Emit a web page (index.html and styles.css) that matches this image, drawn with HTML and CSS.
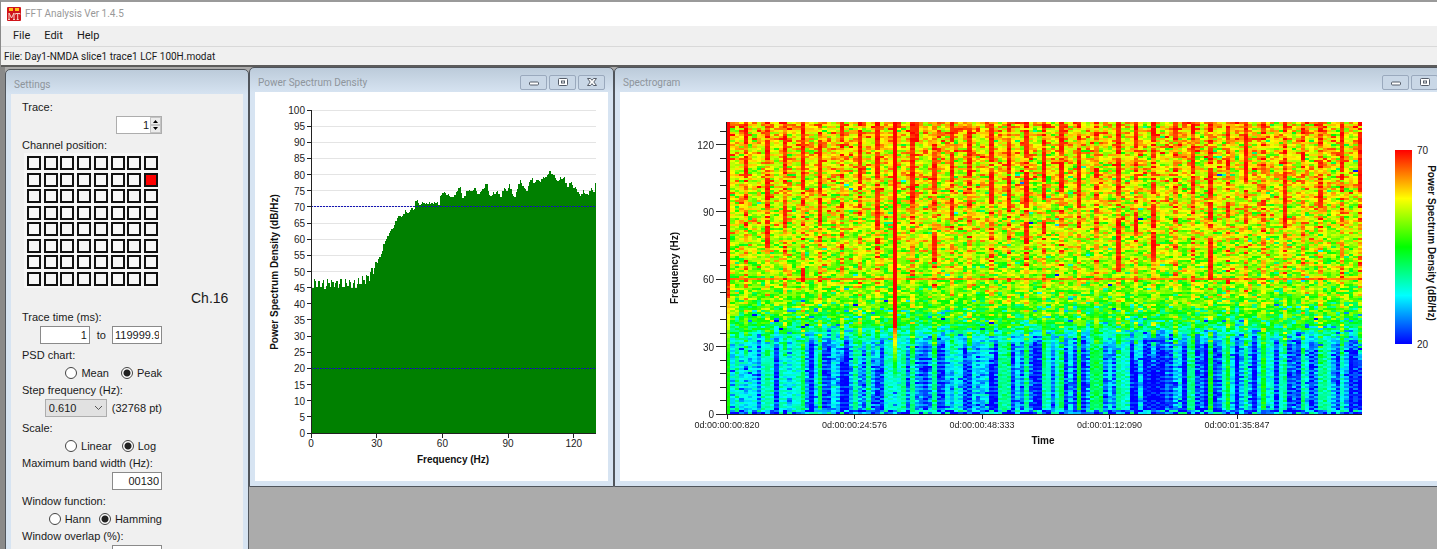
FILE: index.html
```html
<!DOCTYPE html>
<html lang="en">
<head>
<meta charset="utf-8">
<title>FFT Analysis Ver 1.4.5</title>
<link rel="stylesheet" href="styles.css">
</head>
<body>
<div class="app">
  <header class="titlebar">
    <svg class="logo" width="14" height="14" viewBox="0 0 14 14" aria-hidden="true">
      <rect width="14" height="14" rx="1" fill="#d0141a"/>
      <rect x="2" y="1" width="4" height="3" fill="#ffc21a"/>
      <rect x="8" y="1" width="4" height="3" fill="#ffc21a"/>
      <path d="M1 12.500h2M2 12V6l2.500 5L7 6v6M6 12.500h2M8.500 7.500V6.500h4.500v1M10.700 6.500v6M9.700 12.500h2" fill="none" stroke="#f6d3c8" stroke-width="1"/>
    </svg>
    <span>FFT Analysis Ver 1.4.5</span>
  </header>
  <nav class="menubar">
    <button class="menu">File</button>
    <button class="menu">Edit</button>
    <button class="menu">Help</button>
  </nav>
  <div class="filebar">File: Day1-NMDA slice1 trace1 LCF 100H.modat</div>
  <main class="desktop">
    <section class="window settings">
      <div class="caption"><span>Settings</span></div>
      <form class="form">
        <label class="label" for="trace">Trace:</label>
        <div class="row">
          <span class="spinner">
            <input class="field" id="trace" value="1">
            <span class="steps">
              <button type="button" class="step" aria-label="Increase"><svg width="7" height="4" viewBox="0 0 7 4"><path d="M1 4L3.500 1L6 4z"/></svg></button>
              <button type="button" class="step" aria-label="Decrease"><svg width="7" height="4" viewBox="0 0 7 4"><path d="M1 0L3.500 3L6 0z"/></svg></button>
            </span>
          </span>
        </div>
        <div class="label channel-label" id="channel-label">Channel position:</div>
        <div class="channels" id="channels" role="group" aria-labelledby="channel-label"></div>
        <output class="channel-name">Ch.16</output>
        <label class="label" for="from">Trace time (ms):</label>
        <div class="row">
          <input class="field medium" id="from" value="1">
          <label class="to" for="until">to</label>
          <input class="field medium clipped" id="until" value="119999.95">
        </div>
        <div class="label">PSD chart:</div>
        <div class="options">
          <label class="option"><input type="radio" name="psd">Mean</label>
          <label class="option"><input type="radio" name="psd" checked>Peak</label>
        </div>
        <label class="label" for="step">Step frequency (Hz):</label>
        <div class="row">
          <span class="picker">
            <select id="step"><option>0.610</option></select>
            <svg class="chevron" width="9" height="6" viewBox="0 0 9 6"><path d="M1 1l3.500 3.500L8 1" fill="none" stroke="#555"/></svg>
          </span>
          <span class="points">(32768 pt)</span>
        </div>
        <div class="label">Scale:</div>
        <div class="options wide">
          <label class="option"><input type="radio" name="scale">Linear</label>
          <label class="option"><input type="radio" name="scale" checked>Log</label>
        </div>
        <label class="label" for="band">Maximum band width (Hz):</label>
        <div class="row"><input class="field medium" id="band" value="00130"></div>
        <div class="label">Window function:</div>
        <div class="options tight">
          <label class="option"><input type="radio" name="win">Hann</label>
          <label class="option"><input type="radio" name="win" checked>Hamming</label>
        </div>
        <label class="label" for="overlap">Window overlap (%):</label>
        <div class="row"><input class="field medium" id="overlap" value="0"></div>
      </form>
    </section>

    <section class="window psd">
      <div class="caption">
        <span>Power Spectrum Density</span>
        <span class="controls">
          <button class="control" aria-label="Minimize"><svg width="12" height="10" viewBox="0 0 12 10"><rect x="1.500" y="5" width="9" height="3" rx="1" fill="#fff" stroke="#555d69"/></svg></button>
          <button class="control" aria-label="Restore"><svg width="12" height="10" viewBox="0 0 12 10"><rect x="1.500" y="1.500" width="9" height="7" rx="1" fill="#fff" stroke="#555d69"/><rect x="4.500" y="4" width="3" height="2" fill="#fff" stroke="#555d69"/></svg></button>
          <button class="control" aria-label="Close"><svg width="12" height="10" viewBox="0 0 12 10"><path d="M1.500 1.500h3L6 3.300 7.500 1.500h3L7.800 5l2.700 3.500h-3L6 6.700 4.500 8.500h-3L4.200 5z" fill="#fff" stroke="#555d69"/></svg></button>
        </span>
      </div>
      <svg class="chart" id="psd-chart" width="353" height="389" viewBox="255 92 353 389"></svg>
    </section>

    <section class="window spectrogram">
      <div class="caption">
        <span>Spectrogram</span>
        <span class="controls">
          <button class="control" aria-label="Minimize"><svg width="12" height="10" viewBox="0 0 12 10"><rect x="1.500" y="5" width="9" height="3" rx="1" fill="#fff" stroke="#555d69"/></svg></button>
          <button class="control" aria-label="Restore"><svg width="12" height="10" viewBox="0 0 12 10"><rect x="1.500" y="1.500" width="9" height="7" rx="1" fill="#fff" stroke="#555d69"/><rect x="4.500" y="4" width="3" height="2" fill="#fff" stroke="#555d69"/></svg></button>
          <button class="control" aria-label="Close"><svg width="12" height="10" viewBox="0 0 12 10"><path d="M1.500 1.500h3L6 3.300 7.500 1.500h3L7.800 5l2.700 3.500h-3L6 6.700 4.500 8.500h-3L4.200 5z" fill="#fff" stroke="#555d69"/></svg></button>
        </span>
      </div>
      <svg class="chart" id="spectrogram-chart" width="850" height="389" viewBox="620 92 850 389">
        <defs>
          <linearGradient id="scale" x1="0" y1="0" x2="0" y2="1">
            <stop offset="0" stop-color="#f00"/><stop offset=".25" stop-color="#ff0"/><stop offset=".5" stop-color="#0f0"/><stop offset=".75" stop-color="#0ff"/><stop offset="1" stop-color="#00f"/>
          </linearGradient>
        </defs>
        <foreignObject x="726" y="122" width="636" height="292"><canvas id="heat" class="heat" width="636" height="292"></canvas></foreignObject>
        <rect x="1395" y="150" width="17" height="194" fill="url(#scale)"/>
        <text class="tick" x="1417" y="154">70</text>
        <text class="tick" x="1417" y="348">20</text>
        <text class="axis" text-anchor="middle" transform="translate(1428 243) rotate(90)">Power Spectrum Density (dB/Hz)</text>
      </svg>
    </section>
  </main>
</div>
<script src="charts.js"></script>
</body>
</html>
```
FILE: styles.css
```css
* { box-sizing: border-box; }
body {
  margin: 0;
  height: 100vh;
  overflow: hidden;
  background: #f0f0f0;
  color: #1a1a1a;
  font: 11px/16px "Liberation Sans", Arial, sans-serif;
}
button, input, select { font: inherit; color: inherit; margin: 0; }
.app {
  height: 100%;
  display: flex;
  flex-direction: column;
  border-top: 2px solid #9a9a9a;
  border-left: 1px solid #8a8a8a;
}
.titlebar, .menubar, .filebar, .caption { font-family: Roboto, "Open Sans", sans-serif; }
.titlebar {
  flex: none;
  display: flex;
  align-items: center;
  gap: 4px;
  height: 24px;
  padding-left: 6px;
  background: #fff;
  color: #999;
  font-size: 10px;
}
.menubar { flex: none; display: flex; height: 20px; padding-left: 6px; }
.menu { border: 0; background: none; padding: 0 6px; margin-right: 2px; }
.filebar {
  flex: none;
  height: 19px;
  padding: 0 3px;
  border-top: 1px solid #d9d9d9;
  font-size: 10px;
  line-height: 19px;
}
.desktop {
  flex: 1;
  min-height: 0;
  display: flex;
  align-items: flex-start;
  padding-left: 4px;
  border-top: 2px solid #5c5c5c;
  background: linear-gradient(90deg, #8a8a8a 4px, #ababab 4px);
  overflow: hidden;
}
.window {
  flex: none;
  border: 1px solid #50555c;
  border-radius: 5px 5px 0 0;
  padding: 0 5px 5px;
  background: linear-gradient(#bccbda, #d7e4f2 25px);
}
.settings { width: 244px; margin-top: 2px; }
.psd { width: 365px; }
.caption {
  display: flex;
  align-items: center;
  justify-content: space-between;
  height: 24px;
  padding: 5px 3px 0 3px;
  color: #8e959c;
  font-size: 10px;
}
.controls { display: flex; gap: 2px; padding-bottom: 1px; }
.control {
  width: 27px;
  height: 15px;
  padding: 0;
  display: grid;
  place-items: center;
  border: 1px solid #9aa9bd;
  border-radius: 2px;
  background: #c9d7e6;
}
.form { background: #f0f0f0; padding: 4px 81px 0 11px; height: 100vh; display: flex; flex-direction: column; }
.label { flex: none; height: 18px; line-height: 18px; white-space: nowrap; }
.row { flex: none; display: flex; justify-content: flex-end; height: 20px; }
.channel-label { height: 17px; }
.field {
  height: 18px;
  padding: 0 2px;
  border: 1px solid #8a8a8a;
  border-radius: 0;
  background: #fff;
  text-align: right;
  outline: 0;
}
.medium { width: 50px; }
.clipped { text-align: left; }
.to { padding: 0 6px 0 7px; line-height: 18px; }
.spinner { display: flex; width: 46px; height: 18px; border: 1px solid #adadad; background: #fff; }
.spinner .field { width: 33px; height: 16px; border: 0; padding: 0 1px; }
.steps { display: flex; flex-direction: column; width: 11px; }
.step { flex: 1; min-height: 0; display: grid; place-items: center; padding: 0; border: 1px solid #c4c4c4; background: #ececec; }
.channels {
  flex: none;
  display: grid;
  grid-template-columns: repeat(8, 14px);
  grid-auto-rows: 14px;
  place-content: space-between;
  width: 136px;
  height: 135px;
  margin: 0 0 1px 2px;
  padding: 3px 2px 2px 3px;
  background: #f7f7f7;
}
.channel { padding: 0; border: 2px solid #111; background: #f7f7f7; }
.channel.on { background: #f00; }
.channel-name { flex: none; height: 19px; padding-left: 169px; font-size: 14px; line-height: 19px; }
.options { flex: none; display: flex; justify-content: flex-end; gap: 12px; height: 17px; }
.wide { padding-right: 6px; gap: 10px; }
.tight { gap: 8px; }
.option { display: flex; align-items: center; gap: 4px; }
.option input {
  appearance: none;
  width: 12px;
  height: 12px;
  border: 1px solid #444;
  border-radius: 50%;
  background: #fff;
}
.option input:checked { background: radial-gradient(circle, #222 3px, #fff 4px); }
.picker { position: relative; height: 18px; margin-right: 5px; }
.picker select { appearance: none; width: 62px; height: 18px; padding: 0 3px; border: 1px solid #adadad; border-radius: 0; background: #e1e1e1; }
.chevron { position: absolute; right: 4px; top: 6px; pointer-events: none; }
.points { line-height: 18px; }
.chart { display: block; background: #fff; }
.heat { display: block; }
.tick { font-size: 10px; fill: #222; }
.time { font-size: 9px; }
.axis { font-size: 10px; font-weight: bold; fill: #111; }
.grid { stroke: #e4e4e4; }
.line { stroke: #222; }
.limit { stroke: #1414b4; stroke-dasharray: 2 1; }
.area { fill: #008000; }
```
FILE: charts.js
```js
const NS = "http://www.w3.org/2000/svg";
function add(parent, tag, attrs, text) {
  const el = document.createElementNS(NS, tag);
  for (const k in attrs) el.setAttribute(k, attrs[k]);
  if (text !== undefined) el.textContent = text;
  parent.appendChild(el);
  return el;
}
function line(parent, x1, y1, x2, y2, cls) {
  add(parent, "line", { x1, y1, x2, y2, class: cls, "shape-rendering": "crispEdges" });
}

// Electrode grid
const channels = document.getElementById("channels");
for (let i = 0; i < 64; i++) {
  const b = document.createElement("button");
  b.type = "button";
  b.className = i === 15 ? "channel on" : "channel";
  b.setAttribute("aria-label", "Channel " + (i + 1));
  channels.appendChild(b);
}

// Power spectrum density
const levels = [43,45,47.7,47,45.3,47,47.2,45.2,46.5,47.3,44.7,45.5,47.8,46.5,45.2,47.5,46.8,45.2,46.5,47.2,45,46,47.6,45.2,45.3,47.8,46.5,45.5,47.5,46.8,45,46.5,47.5,44.8,46,48,46,46,48.7,47.5,46.2,49,48.5,47,50,51,49.3,51,53,52.5,53.8,54.5,55.5,56.5,58.5,59.5,60.2,61,61.8,62.5,63.3,63.6,64.5,65.6,66.5,67.2,67.2,67,67.2,67.8,69,68.3,68,68.4,69.2,69.8,69,69.5,71.7,72,71.2,70.5,70.8,71.4,71.3,70.8,71.3,71,71.5,70.8,71.3,71,71.4,71.3,71.5,70.5,73.3,73.8,74.3,74.7,74.2,73.8,74,73.5,73.2,73.2,73.2,73.8,74.5,75,75.8,76.3,74.3,72.8,73.3,73.3,75,75,75.2,75,75,75.3,75.8,75,74,74,74.5,75,75.5,76,77,77,75,73.8,73.5,73.8,74.5,74,74.5,74.8,74,73,73,75,76,75.5,75,76,77,75.5,74,73.5,73,74.5,75.5,77,78.2,77.5,76.5,76,75.5,75,76.5,77.8,78.3,79,77.5,77.8,78.3,78.3,78,77.7,78.5,79.2,79,79.3,80,80.3,81,80.3,80.3,80,79,78.3,78,78.3,79.2,78.8,79,79.2,77.5,76.3,76.3,77.5,77.8,76.8,76,76.3,75.5,74.5,74,73.3,74,75.3,74.2,74,74,73.8,74.8,75.8,75.2,74.5,77.3];
const psd = document.getElementById("psd-chart");
const py = v => 433 - v * 3.23;
for (let v = 5; v <= 100; v += 5) line(psd, 311, py(v), 596, py(v), "grid");
let d = "M311 433";
levels.forEach((v, i) => { d += `V${py(v).toFixed(1)}H${(311 + (i + 1) * 285 / 213).toFixed(1)}`; });
add(psd, "path", { d: d + "V433z", class: "area", "shape-rendering": "crispEdges" });
line(psd, 311, py(70), 596, py(70), "limit");
line(psd, 311, py(20), 596, py(20), "limit");
for (let v = 0; v <= 100; v += 5) {
  line(psd, 307, py(v), 311, py(v), "line");
  add(psd, "text", { x: 305, y: py(v) + 4, class: "tick", "text-anchor": "end" }, v);
}
line(psd, 311, 110, 311, 433, "line");
line(psd, 311, 433, 596, 433, "line");
for (let f = 0; f <= 120; f += 30) {
  const x = 311 + f * 2.19;
  line(psd, x, 433, x, 438, "line");
  add(psd, "text", { x, y: 447, class: "tick", "text-anchor": "middle" }, f);
}
add(psd, "text", { x: 453, y: 463, class: "axis", "text-anchor": "middle" }, "Frequency (Hz)");
add(psd, "text", { transform: "translate(278 272) rotate(-90)", class: "axis", "text-anchor": "middle" }, "Power Spectrum Density (dB/Hz)");

// Spectrogram axes
const sg = document.getElementById("spectrogram-chart");
for (let f = 0; f <= 126; f += 6) {
  const y = 414 - f * 2.245, major = f % 30 === 0;
  line(sg, major ? 716 : 720, y, 726, y, "line");
  if (major) add(sg, "text", { x: 714, y: y + 4, class: "tick", "text-anchor": "end" }, f);
}
line(sg, 726, 122, 726, 414, "line");
line(sg, 726, 414, 1362, 414, "line");
["0d:00:00:00:820", "0d:00:00:24:576", "0d:00:00:48:333", "0d:00:01:12:090", "0d:00:01:35:847"].forEach((t, i) => {
  const x = 727 + i * 127.5;
  line(sg, x, 414, x, 419, "line");
  add(sg, "text", { x, y: 428, class: "tick time", "text-anchor": "middle" }, t);
});
add(sg, "text", { x: 1043, y: 444, class: "axis", "text-anchor": "middle" }, "Time");
add(sg, "text", { transform: "translate(678 268) rotate(-90)", class: "axis", "text-anchor": "middle" }, "Frequency (Hz)");

// Spectrogram cells: base level of each column below 30 Hz, 0 (weak) to 9
const low = "9464444256515545573047114300363263115545626321361143541143440166614262006" +
  "5257141813777242655004000002134066120812584036304845156121641266531530" + "10";
const pulses = [0,4,9,13,17,21,26,30,34,38,42,47,51,55,60,64,68,72,76,80,84,89,93,97,102,106,110,114,118,122,127,131,135,140,144];
// Strong bursts: column, then pairs of start and end offsets from the top
const bursts = [
  [0,0,175],[4,0,20,35,55],[9,18,38,55,78,104,125],[13,11,50,83,105],[17,0,68,145,160],[21,22,70,80,102],[26,0,14],
  [30,8,62],[34,0,25,40,55,65,105,116,122],[38,0,205],[42,0,82],[43,0,20],[47,40,65,110,140],[51,0,18,30,60,75,95],
  [55,5,48],[60,2,40,50,82],[64,20,52,60,90],[68,10,35,50,85,100,122],[72,25,60,62,78,100,112],[76,0,32,40,70],[80,25,55,60,85],
  [84,45,55],[89,0,30,35,72,96,150],[93,0,25,90,110],[97,0,20,60,72,82,105,110,138],[102,0,15],[106,25,50,55,72],
  [110,0,10,45,75,80,98,115,158],[114,80,95],[118,0,20,30,60],[127,0,10,50,105],[135,0,8,38,45,68,85],[140,0,50],[144,10,70]
];
const means = [[0,.79],[20,.76],[100,.7],[150,.64],[175,.58],[195,.5],[210,.42],[225,.34],[292,.25]];
function meanAt(y) {
  for (let i = 1; i < means.length; i++) {
    const [a, u] = means[i - 1], [b, v] = means[i];
    if (y <= b) return u + (v - u) * (y - a) / (b - a);
  }
  return .25;
}
let seed = 20177;
function rnd() { seed = (seed * 1103515245 + 12345) % 2147483648; return seed / 2147483648; }
function color(t) {
  t = Math.max(0, Math.min(1, t)) * 4;
  const k = Math.min(3, Math.floor(t)), f = Math.round((t - k) * 255);
  return `rgb(${[[0, f, 255], [0, 255, 255 - f], [f, 255, 0], [255, 255 - f, 0]][k]})`;
}
const ctx = document.getElementById("heat").getContext("2d");
const burstMap = new Map(bursts.map(b => [b[0], b.slice(1)]));
for (let c = 0; c < 145; c++) {
  const x0 = Math.round(c * 636 / 145), x1 = Math.round((c + 1) * 636 / 145);
  const pulse = pulses.includes(c), segs = burstMap.get(c) || [];
  const base = Number(low[c]) * .058 + .01, phase = rnd() < .5 ? 0 : 1;
  const nearPulse = pulses.includes(c - 1) || pulses.includes(c + 1);
  for (let r = 0; r < 146; r++) {
    const y = r * 2;
    const noise = (rnd() + rnd() + rnd() - 1.5) * .2;
    let upper = meanAt(y) + noise + (nearPulse ? .015 : 0);
    if (pulse) upper += y < 170 ? .15 : .12;
    if (rnd() < .035) upper -= .2;
    if (rnd() < .003) upper -= .5;
    if (y > 180 && y < 228 && rnd() < .08) upper -= .25;
    if (y === 156) upper = (pulse ? .93 : .87) + noise * .3;
    const stripe = (r + phase) % 2 ? .05 : -.05;
    let lower = base + stripe * (base > .2 ? .6 : 1) + noise * .3;
    if (base < .3 && rnd() < .12) lower -= .15;
    if (y > 286) lower = rnd() * .5 - .1;
    const mix = Math.max(0, Math.min(1, (y - (pulse ? 215 : 198)) / 30));
    let v = upper * (1 - mix) + lower * mix;
    for (let s = 0; s < segs.length; s += 2) if (y >= segs[s] && y < segs[s + 1]) v = .97 + noise * .25;
    if (c === 0 && y >= 175) v = Math.max(.5, .85 - (y - 175) * .006) + noise * .2;
    if (c === 38 && y >= 205 && y < 265) v = .9 - (y - 205) * .011 + noise * .2;
    if (c === 38 && y < 205) v = 1;
    if (c === 0 && y < 160) v = 1;
    ctx.fillStyle = color(v);
    ctx.fillRect(x0, y, x1 - x0, 2);
  }
}
```
